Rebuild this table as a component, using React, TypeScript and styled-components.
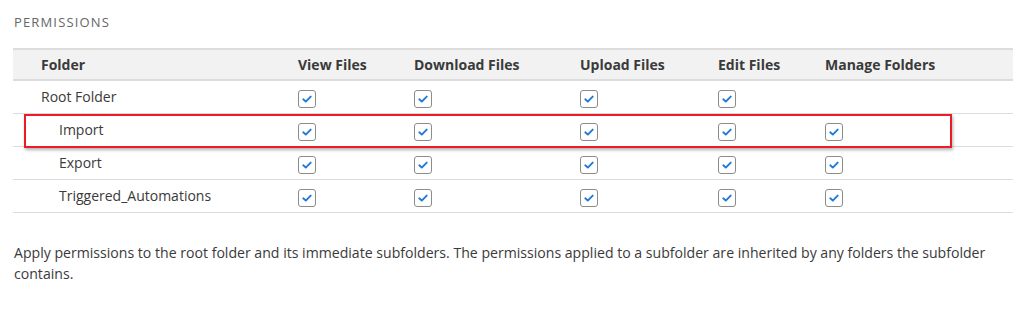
import React from "react";
import styled, { createGlobalStyle } from "styled-components";

const GlobalStyle = createGlobalStyle`
  html, body { margin: 0; padding: 0; background: #ffffff; }
  body { font-family: "Open Sans", "Noto Sans", Arial, sans-serif; color: #333; }
`;

const Page = styled.div`
  padding: 12px 11px 0 13px;
  width: 1024px;
  box-sizing: border-box;
`;

const Title = styled.div`
  font-size: 13px;
  line-height: 20px;
  letter-spacing: 1.15px;
  color: #666;
  padding-left: 1px;
`;

const Table = styled.div`
  margin-top: 16px;
  width: 1000px;
  border-top: 2px solid #dcdcdc;
`;

const COLS = "285px 116px 166px 138px 107px 1fr";

const HeaderRow = styled.div`
  display: grid;
  grid-template-columns: ${COLS};
  align-items: center;
  height: 29px;
  background: #f2f2f2;
  border-bottom: 2px solid #dcdcdc;
`;

const HeadCell = styled.div<{ $first?: boolean }>`
  font-size: 14px;
  font-weight: 700;
  color: #3a3a3a;
  padding-top: 3px;
  padding-left: ${(p) => (p.$first ? "28px" : "0")};
`;

const Row = styled.div<{ $highlight?: boolean }>`
  position: relative;
  display: grid;
  grid-template-columns: ${COLS};
  align-items: center;
  height: 32px;
  border-bottom: 1px solid #dcdcdc;

  ${(p) =>
    p.$highlight &&
    `
    &::after {
      content: "";
      position: absolute;
      left: 11px;
      width: 928px;
      top: 0px;
      height: 34px;
      box-sizing: border-box;
      border: 2px solid #ec1c24;
      box-shadow: 1px 2px 3px rgba(0, 0, 0, 0.3);
      pointer-events: none;
    }
  `}
`;

const NameCell = styled.div<{ $indent?: boolean }>`
  font-size: 14px;
  color: #3a3a3a;
  padding-left: ${(p) => (p.$indent ? "46px" : "28px")};
  margin-top: -1px;
`;

const Cell = styled.div`
  display: flex;
  align-items: center;
  margin-top: 3px;
`;

const Box = styled.span`
  display: inline-flex;
  align-items: center;
  justify-content: center;
  width: 18px;
  height: 18px;
  box-sizing: border-box;
  border: 1px solid #8c8c8c;
  border-radius: 3px;
  background: #fff;
`;

const Note = styled.p`
  margin: 29px 0 0 1px;
  font-size: 14.1px;
  line-height: 21px;
  color: #3a3a3a;
  max-width: 1000px;
`;

const Check = () => (
  <Box>
    <svg width="10" height="8" viewBox="0 0 10 8" aria-hidden="true">
      <path
        d="M1.3 4.3 L3.8 6.6 L8.7 1.6"
        fill="none"
        stroke="#1f7ad8"
        strokeWidth="1.9"
        strokeLinecap="round"
        strokeLinejoin="round"
      />
    </svg>
  </Box>
);

type RowData = { name: string; indent: boolean; perms: boolean[]; highlight?: boolean };

const rows: RowData[] = [
  { name: "Root Folder", indent: false, perms: [true, true, true, true, false] },
  { name: "Import", indent: true, perms: [true, true, true, true, true], highlight: true },
  { name: "Export", indent: true, perms: [true, true, true, true, true] },
  { name: "Triggered_Automations", indent: true, perms: [true, true, true, true, true] },
];

const headers = ["View Files", "Download Files", "Upload Files", "Edit Files", "Manage Folders"];

export default function App() {
  return (
    <>
      <GlobalStyle />
      <Page>
        <Title>PERMISSIONS</Title>
        <Table>
          <HeaderRow>
            <HeadCell $first>Folder</HeadCell>
            {headers.map((h) => (
              <HeadCell key={h}>{h}</HeadCell>
            ))}
            <div />
          </HeaderRow>
          {rows.map((r) => (
            <Row key={r.name} $highlight={r.highlight}>
              <NameCell $indent={r.indent}>{r.name}</NameCell>
              {r.perms.map((p, i) => (
                <Cell key={i}>{p ? <Check /> : null}</Cell>
              ))}
            </Row>
          ))}
        </Table>
        <Note>
          Apply permissions to the root folder and its immediate subfolders. The permissions applied to a
          subfolder are inherited by any folders the subfolder contains.
        </Note>
      </Page>
    </>
  );
}
